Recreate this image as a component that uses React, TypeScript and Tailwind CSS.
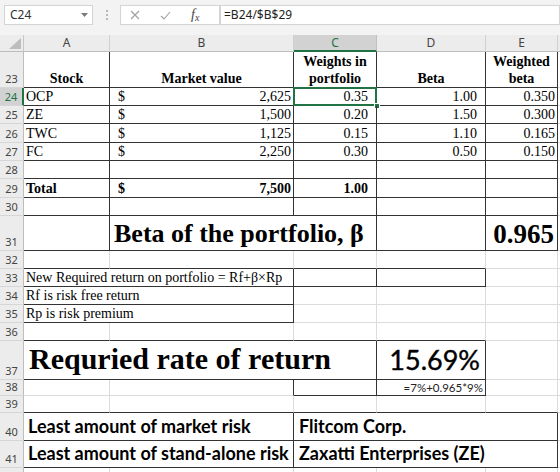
import React from 'react';

type B = 'g' | 'd' | 'n';

const rCls: Record<B, string> = {
  g: 'border-r border-r-[#dcdcdc]',
  d: 'border-r border-r-[#333333]',
  n: '',
};
const bCls: Record<B, string> = {
  g: 'border-b border-b-[#dcdcdc]',
  d: 'border-b border-b-[#333333]',
  n: '',
};

function Cell({
  w,
  r = 'g',
  b = 'g',
  className = '',
  children,
}: {
  w: string;
  r?: B;
  b?: B;
  className?: string;
  children?: React.ReactNode;
}) {
  return (
    <div className={`${w} shrink-0 h-full flex items-end overflow-visible whitespace-nowrap ${rCls[r]} ${bCls[b]} ${className}`}>
      {children}
    </div>
  );
}

function Row({ n, h, sel = false, children }: { n?: number; h: string; sel?: boolean; children?: React.ReactNode }) {
  return (
    <div className={`flex ${h}`}>
      <div
        className={`w-[24px] shrink-0 h-full flex items-end justify-center pb-[2px] text-[11px] leading-[13px] border-b border-b-[#d6d6d6] ${
          sel
            ? 'bg-[#d2d2d2] text-[#217346] border-r-2 border-r-[#217346]'
            : 'bg-[#ececec] text-[#444] border-r border-r-[#bdbdbd]'
        }`}
        style={{ fontFamily: '"Noto Sans", sans-serif' }}
      >
        {n}
      </div>
      {children}
      <div className="flex-1 h-full border-b border-b-[#dcdcdc]" />
    </div>
  );
}

const serif = { fontFamily: '"Liberation Serif", "Times New Roman", serif' };
const calibri = { fontFamily: 'Lato, "Noto Sans", sans-serif' };

function StockRow({ n, h, name, mv, w, beta, wb, sel = false }: { n: number; h: string; name: string; mv: string; w: string; beta: string; wb: string; sel?: boolean }) {
  return (
    <Row n={n} h={h} sel={sel}>
      <Cell w="w-[86px]" r="d" b="d" className="pl-[2px]">{name}</Cell>
      <Cell w="w-[184px]" r="d" b="d" className="pl-[8px] pr-[2px] justify-between">
        <span>$</span>
        <span>{mv}</span>
      </Cell>
      <Cell w="w-[83px]" r="d" b="d" className="justify-end pr-[8px] relative">
        {w}
        {sel && (
          <>
            <div className="absolute left-[-1px] top-[-1px] right-[-1px] bottom-[-1px] border-2 border-[#217346]" />
            <div className="absolute right-[-4px] bottom-[-4px] w-[6px] h-[6px] bg-[#217346] border border-white" />
          </>
        )}
      </Cell>
      <Cell w="w-[109px]" r="d" b="d" className="justify-end pr-[8px]">{beta}</Cell>
      <Cell w="w-[72px]" r="d" b="d" className="justify-end pr-[2px]">{wb}</Cell>
    </Row>
  );
}

export default function App() {
  return (
    <div className="w-[560px] h-[472px] overflow-hidden bg-white text-black">
      {/* formula bar */}
      <div className="h-[35px] bg-[#f3f3f3] flex items-start pt-[5px]" style={{ fontFamily: '"Noto Sans", sans-serif' }}>
        <div className="ml-[4px] w-[89px] h-[20px] bg-white border border-[#d4d4d4] flex items-center justify-between pl-[5px] pr-[4px]">
          <span className="text-[12px] text-[#333] leading-none">C24</span>
          <svg width="7" height="4" viewBox="0 0 7 4">
            <path d="M0 0 L7 0 L3.5 4 Z" fill="#7a7a7a" />
          </svg>
        </div>
        <div className="w-[27px] h-[20px] flex flex-col items-center justify-center gap-[2px]">
          <div className="w-[2px] h-[2px] bg-[#b8b8b8]" />
          <div className="w-[2px] h-[2px] bg-[#b8b8b8]" />
          <div className="w-[2px] h-[2px] bg-[#b8b8b8]" />
        </div>
        <div className="w-[100px] h-[20px] bg-white border border-[#d4d4d4] flex items-center">
          <svg width="10" height="10" viewBox="0 0 10 10" className="ml-[9px]">
            <path d="M1 1 L9 9 M9 1 L1 9" stroke="#a0a0a0" strokeWidth="1.1" fill="none" />
          </svg>
          <svg width="11" height="9" viewBox="0 0 11 9" className="ml-[20px]">
            <path d="M1 5 L4 8 L10 1" stroke="#a0a0a0" strokeWidth="1.1" fill="none" />
          </svg>
          <span className="ml-[20px] text-[14px] italic text-[#444] leading-none" style={serif}>
            f<span className="text-[10px] align-[-2px]">x</span>
          </span>
        </div>
        <div className="flex-1 h-[20px] bg-white border border-[#d4d4d4] flex items-center pl-[3px]">
          <span className="text-[12px] text-[#222] leading-none">=B24/$B$29</span>
        </div>
      </div>

      {/* column headers */}
      <div className="flex h-[17px] text-[12px] text-[#444]" style={{ fontFamily: '"Noto Sans", sans-serif' }}>
        <div className="w-[24px] h-full bg-[#ececec] border-r border-r-[#c8c8c8] border-b border-b-[#bdbdbd] flex items-end justify-end pr-[2px] pb-[2px]">
          <svg width="12" height="11" viewBox="0 0 12 11">
            <path d="M12 0 L12 11 L0 11 Z" fill="#bdbdbd" />
          </svg>
        </div>
        <div className="w-[86px] h-full bg-[#ececec] border-r border-r-[#d0d0d0] border-b border-b-[#bdbdbd] flex items-center justify-center leading-none">A</div>
        <div className="w-[184px] h-full bg-[#ececec] border-r border-r-[#d0d0d0] border-b border-b-[#bdbdbd] flex items-center justify-center leading-none">B</div>
        <div className="w-[83px] h-full bg-[#d2d2d2] text-[#217346] border-r border-r-[#c0c0c0] border-b-2 border-b-[#217346] flex items-center justify-center leading-none">C</div>
        <div className="w-[109px] h-full bg-[#ececec] border-r border-r-[#d0d0d0] border-b border-b-[#bdbdbd] flex items-center justify-center leading-none">D</div>
        <div className="w-[72px] h-full bg-[#ececec] border-r border-r-[#d0d0d0] border-b border-b-[#bdbdbd] flex items-center justify-center leading-none">E</div>
        <div className="flex-1 h-full bg-[#ececec] border-b border-b-[#bdbdbd]" />
      </div>

      {/* sheet */}
      <div className="text-[14px] leading-[16px]" style={serif}>
        <Row n={23} h="h-[36px]">
          <Cell w="w-[86px]" r="d" b="d" className="justify-center font-bold">Stock</Cell>
          <Cell w="w-[184px]" r="d" b="d" className="justify-center font-bold">Market value</Cell>
          <Cell w="w-[83px]" r="d" b="d" className="justify-center font-bold">
            <div className="text-center leading-[17px]">Weights in<br />portfolio</div>
          </Cell>
          <Cell w="w-[109px]" r="d" b="d" className="justify-center font-bold">Beta</Cell>
          <Cell w="w-[72px]" r="d" b="d" className="justify-center font-bold">
            <div className="text-center leading-[17px]">Weighted<br />beta</div>
          </Cell>
        </Row>
        <StockRow n={24} h="h-[18px]" name="OCP" mv="2,625" w="0.35" beta="1.00" wb="0.350" sel />
        <StockRow n={25} h="h-[18px]" name="ZE" mv="1,500" w="0.20" beta="1.50" wb="0.300" />
        <StockRow n={26} h="h-[19px]" name="TWC" mv="1,125" w="0.15" beta="1.10" wb="0.165" />
        <StockRow n={27} h="h-[18px]" name="FC" mv="2,250" w="0.30" beta="0.50" wb="0.150" />
        <Row n={28} h="h-[18px]">
          <Cell w="w-[86px]" r="d" b="d" />
          <Cell w="w-[184px]" r="d" b="d" />
          <Cell w="w-[83px]" r="d" b="d" />
          <Cell w="w-[109px]" r="d" b="d" />
          <Cell w="w-[72px]" r="d" b="d" />
        </Row>
        <Row n={29} h="h-[19px]">
          <Cell w="w-[86px]" r="d" b="d" className="pl-[2px] font-bold">Total</Cell>
          <Cell w="w-[184px]" r="d" b="d" className="pl-[8px] pr-[2px] justify-between font-bold">
            <span>$</span>
            <span>7,500</span>
          </Cell>
          <Cell w="w-[83px]" r="d" b="d" className="justify-end pr-[8px] font-bold">1.00</Cell>
          <Cell w="w-[109px]" r="d" b="d" />
          <Cell w="w-[72px]" r="d" b="d" />
        </Row>
        <Row n={30} h="h-[18px]">
          <Cell w="w-[86px]" r="d" b="d" />
          <Cell w="w-[184px]" r="d" b="d" />
          <Cell w="w-[83px]" r="d" b="d" />
          <Cell w="w-[109px]" r="d" b="d" />
          <Cell w="w-[72px]" r="d" b="d" />
        </Row>
        <Row n={31} h="h-[35px]">
          <Cell w="w-[86px]" r="d" b="d" />
          <Cell w="w-[267px]" r="d" b="d" className="pl-[4px] pb-[1px] text-[26px] leading-[30px] font-bold">
            Beta of the portfolio, β
          </Cell>
          <Cell w="w-[109px]" r="d" b="d" />
          <Cell w="w-[72px]" r="d" b="d" className="justify-end pr-[3px] pb-[1px] text-[27px] leading-[30px] font-bold">
            0.965
          </Cell>
        </Row>
        <Row n={32} h="h-[18px]">
          <Cell w="w-[86px]" b="d" />
          <Cell w="w-[184px]" b="d" />
          <Cell w="w-[83px]" b="d" />
          <Cell w="w-[109px]" b="d" />
          <Cell w="w-[72px]" />
        </Row>
        <Row n={33} h="h-[18px]">
          <Cell w="w-[270px]" r="d" b="d" className="pl-[2px]">New Required return on portfolio = Rf+β×Rp</Cell>
          <Cell w="w-[83px]" r="d" b="d" />
          <Cell w="w-[109px]" r="d" b="d" />
          <Cell w="w-[72px]" />
        </Row>
        <Row n={34} h="h-[18px]">
          <Cell w="w-[270px]" r="d" b="d" className="pl-[2px]">Rf is risk free return</Cell>
          <Cell w="w-[83px]" />
          <Cell w="w-[109px]" />
          <Cell w="w-[72px]" />
        </Row>
        <Row n={35} h="h-[18px]">
          <Cell w="w-[270px]" r="d" b="d" className="pl-[2px]">Rp is risk premium</Cell>
          <Cell w="w-[83px]" />
          <Cell w="w-[109px]" />
          <Cell w="w-[72px]" />
        </Row>
        <Row n={36} h="h-[18px]">
          <Cell w="w-[86px]" b="d" />
          <Cell w="w-[184px]" b="d" />
          <Cell w="w-[83px]" b="d" />
          <Cell w="w-[109px]" b="d" />
          <Cell w="w-[72px]" />
        </Row>
        <Row n={37} h="h-[39px]">
          <Cell w="w-[353px]" r="d" b="d" className="pl-[5px] pb-[3px] text-[30px] leading-[34px] font-bold">
            Requried rate of return
          </Cell>
          <Cell w="w-[109px]" r="d" b="d" className="justify-end pr-[5px] pb-[3px] text-[27px] leading-[32px]">
            <span style={calibri} className="[-webkit-text-stroke:0.4px_black]">15.69%</span>
          </Cell>
          <Cell w="w-[72px]" />
        </Row>
        <Row n={38} h="h-[16px]">
          <Cell w="w-[86px]" />
          <Cell w="w-[184px]" r="d" />
          <Cell w="w-[83px]" r="d" b="d" />
          <Cell w="w-[109px]" r="d" b="d" className="justify-end pr-[2px] pb-[1px] text-[11.5px] leading-[13px] text-[#222]">
            <span style={calibri}>=7%+0.965*9%</span>
          </Cell>
          <Cell w="w-[72px]" />
        </Row>
        <Row n={39} h="h-[17px]">
          <Cell w="w-[86px]" b="d" />
          <Cell w="w-[184px]" b="d" />
          <Cell w="w-[83px]" b="d" />
          <Cell w="w-[109px]" b="d" />
          <Cell w="w-[72px]" b="d" />
        </Row>
        <Row n={40} h="h-[28px]">
          <Cell w="w-[270px]" r="d" b="d" className="pl-[4px] pb-[2px] text-[18px] leading-[24px] font-bold">
            <span style={calibri}>Least amount of market risk</span>
          </Cell>
          <Cell w="w-[264px]" r="d" b="d" className="pl-[5px] pb-[2px] text-[18px] leading-[24px] font-bold">
            <span style={calibri}>Flitcom Corp.</span>
          </Cell>
        </Row>
        <Row n={41} h="h-[27px]">
          <Cell w="w-[270px]" r="d" b="d" className="pl-[4px] pb-[2px] text-[18px] leading-[24px] font-bold">
            <span style={calibri}>Least amount of stand-alone risk</span>
          </Cell>
          <Cell w="w-[264px]" r="d" b="d" className="pl-[5px] pb-[2px] text-[18px] leading-[24px] font-bold">
            <span style={calibri}>Zaxatti Enterprises (ZE)</span>
          </Cell>
        </Row>
        <Row h="h-[18px]">
          <Cell w="w-[86px]" />
          <Cell w="w-[184px]" />
          <Cell w="w-[83px]" />
          <Cell w="w-[109px]" />
          <Cell w="w-[72px]" />
        </Row>
      </div>
    </div>
  );
}
